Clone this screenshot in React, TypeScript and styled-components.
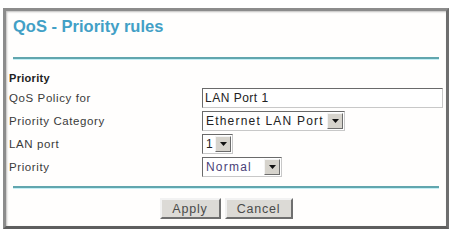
import React from 'react';
import styled, { createGlobalStyle } from 'styled-components';

const GlobalStyle = createGlobalStyle`
  html, body {
    margin: 0;
    padding: 0;
    background: #ffffff;
    font-family: "Liberation Sans", Arial, sans-serif;
  }
`;

const Frame = styled.div`
  box-sizing: border-box;
  margin: 8px 0 0 3px;
  width: 446px;
  height: 221px;
  border: 3px solid #8c8c8c;
  border-right-color: #6e6e6e;
  border-bottom-color: #5e5e5e;
  box-shadow: inset 1px 1px 2px rgba(0, 0, 0, 0.25);
  background: #fffefd;
  display: flex;
  flex-direction: column;
`;

const Title = styled.div`
  padding: 5px 0 0 7px;
  height: 20px;
  line-height: 20px;
  font-size: 16.5px;
  font-weight: bold;
  color: #42a0c6;
`;

const Rule = styled.div<{ $top: number }>`
  margin: ${p => p.$top}px 7px 0 7px;
  height: 2px;
  background: #62a6ae;
  border-bottom: 1px solid #c6f0f6;
`;

const Form = styled.div`
  display: grid;
  grid-template-columns: 193px 1fr;
  grid-auto-rows: 23px;
  padding: 0 3px 0 3px;
  align-items: center;
`;

const Section = styled.div`
  margin-top: 10px;
  padding-left: 3px;
  height: 16px;
  line-height: 16px;
  font-size: 11px;
  font-weight: bold;
  letter-spacing: 0.3px;
  color: #222;
`;

const Label = styled.div`
  font-size: 11.5px;
  letter-spacing: 0.6px;
  color: #3a3a3a;
`;

const TextBox = styled.div`
  box-sizing: border-box;
  height: 20px;
  width: 241px;
  border: 1px solid #6a6a6a;
  border-right-color: #c8c8c8;
  border-bottom-color: #c8c8c8;
  padding: 0 2px;
  line-height: 18px;
  font-size: 12px;
  letter-spacing: 0.5px;
  color: #222;
  background: #fff;
`;

const Select = styled.div<{ $w: number }>`
  box-sizing: border-box;
  display: flex;
  align-items: center;
  height: 20px;
  width: ${p => p.$w}px;
  border: 1px solid #6a6a6a;
  border-right-color: #c8c8c8;
  border-bottom-color: #c8c8c8;
  background: #fff;
  padding: 1px;
`;

const SelectText = styled.span<{ $color?: string }>`
  flex: 1;
  padding-left: 2px;
  font-size: 12px;
  letter-spacing: 1.2px;
  color: ${p => p.$color || '#222'};
  white-space: nowrap;
  overflow: hidden;
`;

const ArrowBtn = styled.span`
  box-sizing: border-box;
  width: 16px;
  height: 16px;
  background: #d6d3cc;
  border: 1px solid #f4f4f4;
  border-right-color: #6c6c6c;
  border-bottom-color: #6c6c6c;
  display: flex;
  align-items: center;
  justify-content: center;
`;

const Buttons = styled.div`
  margin-top: 9px;
  display: flex;
  justify-content: center;
  gap: 4px;
`;

const Button = styled.button<{ $w: number }>`
  box-sizing: border-box;
  width: ${p => p.$w}px;
  height: 21px;
  padding: 0;
  background: #dcdad6;
  border: 2px solid #f2f2f2;
  border-right-color: #6f6f6f;
  border-bottom-color: #6f6f6f;
  font-family: "Liberation Sans", Arial, sans-serif;
  font-size: 12.5px;
  letter-spacing: 0.8px;
  color: #4a4a4a;
`;

const Arrow = () => (
  <ArrowBtn>
    <svg width="7" height="4" viewBox="0 0 7 4">
      <path d="M0 0h7L3.5 4z" fill="#111" />
    </svg>
  </ArrowBtn>
);

export default function App() {
  return (
    <>
      <GlobalStyle />
      <Frame>
        <Title>QoS - Priority rules</Title>
        <Rule $top={21} />
        <Section>Priority</Section>
        <Form>
          <Label>QoS Policy for</Label>
          <TextBox>LAN Port 1</TextBox>
          <Label>Priority Category</Label>
          <Select $w={143}>
            <SelectText>Ethernet LAN Port</SelectText>
            <Arrow />
          </Select>
          <Label>LAN port</Label>
          <Select $w={31}>
            <SelectText>1</SelectText>
            <Arrow />
          </Select>
          <Label>Priority</Label>
          <Select $w={80}>
            <SelectText $color="#4a3f78">Normal</SelectText>
            <Arrow />
          </Select>
        </Form>
        <Rule $top={8} />
        <Buttons>
          <Button $w={61}>Apply</Button>
          <Button $w={68}>Cancel</Button>
        </Buttons>
      </Frame>
    </>
  );
}
